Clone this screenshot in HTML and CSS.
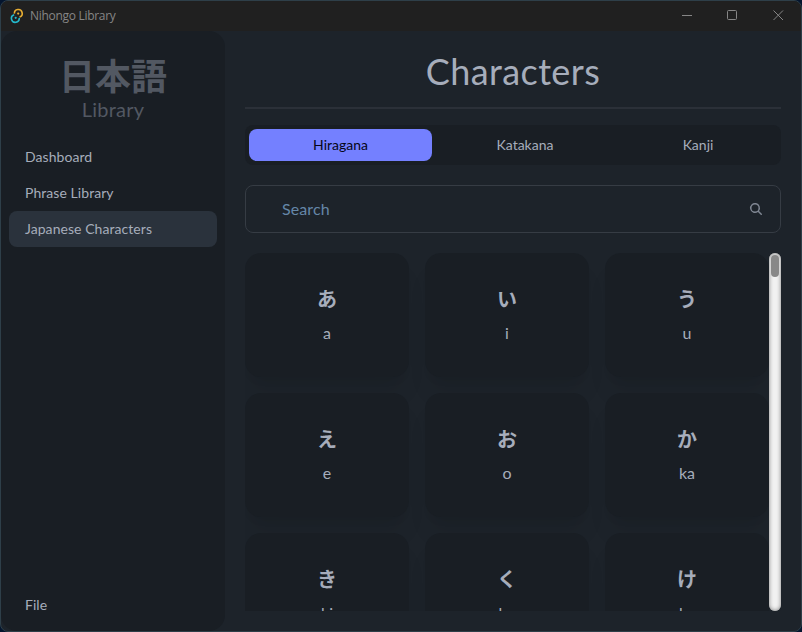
FILE: index.html
```html
<!DOCTYPE html>
<html lang="en">
<head>
<meta charset="utf-8">
<title>Nihongo Library</title>
<link rel="stylesheet" href="styles.css">
</head>
<body>
<div class="window">
  <header class="titlebar">
    <svg class="app-icon" width="14" height="16" viewBox="0 0 14 16" fill="none">
      <path d="M4.4 5.6A3.9 3.9 0 1 1 9.6 9.1" stroke="#e8ae32" stroke-width="1.6"/>
      <path d="M9.2 9.9A3.9 3.9 0 1 1 4.2 6.7" stroke="#24b8cb" stroke-width="1.6"/>
      <circle cx="8.2" cy="5.6" r="1.1" fill="#e8ae32"/>
      <circle cx="5.7" cy="9.8" r="1.1" fill="#24b8cb"/>
    </svg>
    <span class="app-name">Nihongo Library</span>
    <div class="controls">
      <svg width="46" height="30" viewBox="0 0 46 30"><path d="M18 14.5h10"/></svg>
      <svg width="46" height="30" viewBox="0 0 46 30"><rect x="17.5" y="9.5" width="9" height="9" rx="1"/></svg>
      <svg width="46" height="30" viewBox="0 0 46 30"><path d="M17.5 9.5l9.5 9.5M27 9.5L17.5 19"/></svg>
    </div>
  </header>
  <div class="app">
    <aside class="sidebar">
      <div class="brand">
        <div class="brand-jp" lang="ja">日本語</div>
        <div class="brand-en">Library</div>
      </div>
      <nav class="menu">
        <a>Dashboard</a>
        <a>Phrase Library</a>
        <a class="active">Japanese Characters</a>
      </nav>
      <nav class="menu bottom"><a>File</a></nav>
    </aside>
    <main class="content">
      <h1>Characters</h1>
      <div class="divider"></div>
      <div class="tabs">
        <a class="tab selected">Hiragana</a>
        <a class="tab">Katakana</a>
        <a class="tab">Kanji</a>
      </div>
      <label class="search">
        <input type="text" placeholder="Search">
        <svg width="16" height="16" viewBox="0 0 16 16" fill="currentColor"><path fill-rule="evenodd" d="M9.965 11.026a5 5 0 1 1 1.06-1.06l2.755 2.754a.75.75 0 1 1-1.06 1.06l-2.755-2.754ZM10.5 7a3.5 3.5 0 1 1-7 0 3.5 3.5 0 0 1 7 0Z" clip-rule="evenodd"/></svg>
      </label>
      <div class="results">
        <div class="grid">
          <div class="card"><h2 lang="ja">あ</h2><p>a</p></div>
          <div class="card"><h2 lang="ja">い</h2><p>i</p></div>
          <div class="card"><h2 lang="ja">う</h2><p>u</p></div>
          <div class="card"><h2 lang="ja">え</h2><p>e</p></div>
          <div class="card"><h2 lang="ja">お</h2><p>o</p></div>
          <div class="card"><h2 lang="ja">か</h2><p>ka</p></div>
          <div class="card"><h2 lang="ja">き</h2><p>ki</p></div>
          <div class="card"><h2 lang="ja">く</h2><p>ku</p></div>
          <div class="card"><h2 lang="ja">け</h2><p>ke</p></div>
        </div>
        <div class="scrollbar"><div class="thumb"></div></div>
      </div>
    </main>
  </div>
</div>
</body>
</html>
```
FILE: styles.css
```css
* { box-sizing: border-box; }
html, body { margin: 0; height: 100%; }
body {
  background: #04152e;
  color: #a6adbb;
  font-family: Lato, "Noto Sans CJK JP", sans-serif;
  font-size: 16px;
  line-height: 24px;
  overflow: hidden;
}
h1, h2, p { margin: 0; }
.window {
  width: 802px;
  height: 632px;
  border: 1px solid #2e3f49;
  border-radius: 8px;
  overflow: hidden;
  display: flex;
  flex-direction: column;
  background: #1d232a;
}
.titlebar {
  height: 30px;
  flex: none;
  display: flex;
  align-items: center;
  padding-left: 9px;
  background: #202020;
}
.app-name {
  margin-left: 6px;
  font: 12px/16px "Open Sans", sans-serif;
  letter-spacing: -0.3px;
  color: #868686;
}
.controls { margin-left: auto; margin-right: -1px; display: flex; }
.controls svg { fill: none; stroke: #868686; stroke-width: 1; }
.app { flex: 1; display: flex; min-height: 0; }
.sidebar {
  width: 224px;
  flex: none;
  display: flex;
  flex-direction: column;
  padding: 24px 8px 8px;
  background: #191e24;
  border-radius: 16px;
}
.brand { text-align: center; color: #525862; }
.brand-jp { padding-top: 1px; margin-bottom: -1px; font-size: 36px; line-height: 40px; font-weight: 700; }
.brand-en { font-size: 20px; line-height: 28px; letter-spacing: 0.2px; }
.menu {
  display: flex;
  flex-direction: column;
  margin-top: 16px;
  font-size: 14px;
  line-height: 20px;
  letter-spacing: 0.06px;
}
.menu a { padding: 8px 16px; border-radius: 8px; }
.menu .active { background: #2a323c; }
.menu.bottom { margin-top: auto; }
.content {
  flex: 1;
  min-width: 0;
  display: flex;
  flex-direction: column;
  padding: 20px;
}
h1 { font-size: 36px; line-height: 40px; font-weight: 400; text-align: center; letter-spacing: 0.4px; }
.divider { height: 2px; margin: 16px 0; background: #2b3038; flex: none; }
.tabs {
  display: grid;
  grid-template-columns: 183px 186px 160px;
  height: 40px;
  flex: none;
  padding: 4px;
  border-radius: 8px;
  background: #191e24;
  font-size: 14px;
}
.tab { line-height: 32px; text-align: center; border-radius: 8px; }
.selected { background: #7480ff; color: #050617; }
.search {
  display: flex;
  align-items: center;
  height: 48px;
  flex: none;
  margin: 20px 0;
  padding: 0 16px 0 36px;
  border: 1px solid #363c44;
  border-radius: 8px;
}
.search input {
  flex: 1;
  min-width: 0;
  padding: 0;
  border: 0;
  outline: 0;
  background: none;
  font: inherit;
  letter-spacing: 0.1px;
}
.search input::placeholder { color: #6587a8; opacity: 1; }
.search svg { color: #7f8692; }
.results { flex: 1; min-height: 0; display: flex; overflow: hidden; }
.grid {
  display: grid;
  grid-template-columns: repeat(3, 164px);
  grid-auto-rows: 124px;
  gap: 16px;
}
.card {
  display: flex;
  flex-direction: column;
  align-items: center;
  gap: 8px;
  padding: 32px;
  border-radius: 16px;
  background: #191e24;
  box-shadow: 0 20px 25px -5px rgba(0,0,0,.07), 0 8px 10px -6px rgba(0,0,0,.08);
}
.card h2 { font-size: 20px; line-height: 28px; font-weight: 700; }
.scrollbar {
  width: 12px;
  height: 358px;
  padding: 2px;
  border-radius: 6px;
  background: #f1f1f1;
  box-shadow: inset 0 0 4px #808080;
  position: relative;
}
.thumb { height: 22px; border-radius: 4px; background: #888; }
```
